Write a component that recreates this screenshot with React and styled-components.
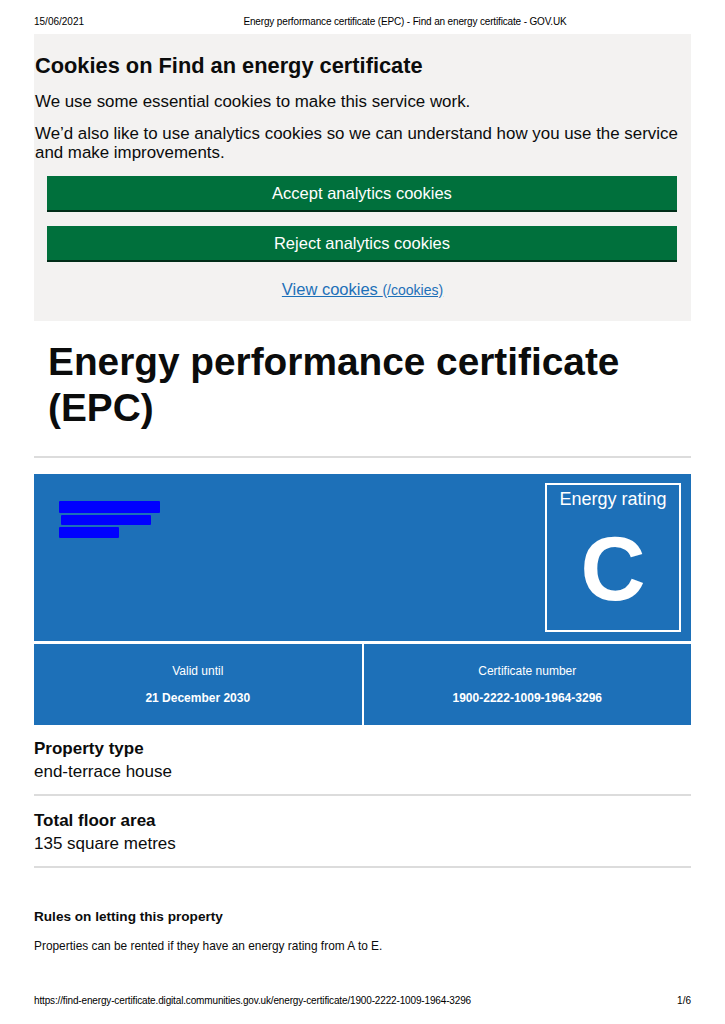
import styled, { createGlobalStyle } from "styled-components"

const GlobalStyle = createGlobalStyle`
  html, body {
    margin: 0;
    padding: 0;
    background: #ffffff;
  }
  body {
    font-family: "Liberation Sans", Arial, sans-serif;
    color: #0b0c0c;
  }
`

const Page = styled.div`
  width: 725px;
  min-height: 1024px;
  display: flex;
  flex-direction: column;
  box-sizing: border-box;
  padding: 0 34px;
`
const PrintHeader = styled.header`
  display: grid;
  grid-template-columns: 85px 1fr;
  padding-top: 16px;
  font-size: 10px;
  line-height: 12px;
  color: #000;
`
const HeaderTitle = styled.span`
  text-align: center;
  letter-spacing: -0.15px;
`
const CookieBanner = styled.section`
  margin-top: 6px;
  background: #f3f2f1;
  padding: 18px 1px 21px;
`
const BannerTitle = styled.h2`
  margin: 0 0 13px;
  font-size: 21.8px;
  line-height: 27px;
  font-weight: 700;
  color: #0b0c0c;
`
const BannerText = styled.p`
  margin: 0 0 13px;
  font-size: 16.9px;
  line-height: 19px;
  color: #0b0c0c;
`
const ButtonGroup = styled.div`
  display: flex;
  flex-direction: column;
  gap: 14px;
  margin: 14px 13px 0 12px;
`
const GreenButton = styled.button`
  height: 36px;
  width: 100%;
  border: none;
  border-bottom: 2px solid #002d18;
  background: #00703c;
  color: #ffffff;
  font-family: "Liberation Sans", Arial, sans-serif;
  font-size: 16.5px;
  padding: 0;
  cursor: pointer;
`
const LinkRow = styled.div`
  margin-top: 17px;
  text-align: center;
  line-height: 20px;
`
const CookieLink = styled.a`
  color: #1d70b8;
  font-size: 16.5px;
  text-decoration: underline;
`
const LinkHint = styled.span`
  font-size: 14px;
`
const MainHeading = styled.h1`
  margin: 18px 0 0;
  padding-left: 14px;
  font-size: 38.8px;
  line-height: 46px;
  font-weight: 700;
  color: #0b0c0c;
`
const SectionBreak = styled.hr`
  margin: 25px 0 16px;
  border: none;
  border-top: 2px solid #dcdcdc;
`
const Certificate = styled.div`
  display: flex;
  flex-direction: column;
  gap: 3px;
  background: #ffffff;
`
const CertificateTop = styled.div`
  height: 167px;
  background: #1d70b8;
  display: flex;
  align-items: flex-start;
  justify-content: space-between;
  padding: 9px 10px 9px 25px;
  box-sizing: border-box;
`
const Address = styled.div`
  display: flex;
  flex-direction: column;
  gap: 2px;
  margin-top: 18px;
`
const Redacted = styled.span`
  display: block;
  height: ${(p) => p.$h || 11}px;
  width: ${(p) => p.$w}px;
  margin-left: ${(p) => p.$x || 0}px;
  background: #0000ff;
  border-radius: 1px;
`
const RatingBox = styled.div`
  width: 136px;
  height: 149px;
  box-sizing: border-box;
  border: 2px solid #ffffff;
  display: flex;
  flex-direction: column;
  align-items: center;
  color: #ffffff;
`
const RatingLabel = styled.div`
  margin-top: 3px;
  font-size: 18px;
  line-height: 22px;
`
const RatingLetter = styled.div`
  margin-top: 9px;
  font-size: 90px;
  line-height: 100px;
  font-weight: 700;
`
const CertificateBottom = styled.div`
  display: grid;
  grid-template-columns: 1fr 1fr;
  gap: 2px;
`
const InfoCell = styled.div`
  height: 81px;
  background: #1d70b8;
  color: #ffffff;
  display: flex;
  flex-direction: column;
  align-items: center;
  padding-top: 20px;
  box-sizing: border-box;
  font-size: 12px;
  line-height: 14px;
`
const InfoValue = styled.div`
  margin-top: 13px;
  font-weight: 700;
`
const SummaryList = styled.dl`
  margin: 12px 0 0;
`
const SummaryRow = styled.div`
  padding-bottom: 11px;
  margin-bottom: 13px;
  border-bottom: 2px solid #dcdcdc;
`
const SummaryKey = styled.dt`
  font-size: 17px;
  line-height: 23px;
  font-weight: 700;
`
const SummaryValue = styled.dd`
  margin: 0;
  font-size: 17px;
  line-height: 23px;
`
const RulesHeading = styled.h3`
  margin: 27px 0 0;
  font-size: 13.6px;
  line-height: 18px;
  font-weight: 700;
`
const RulesText = styled.p`
  margin: 12px 0 0;
  font-size: 11.9px;
  line-height: 16px;
`
const PrintFooter = styled.footer`
  margin-top: auto;
  padding-bottom: 17px;
  display: flex;
  justify-content: space-between;
  font-size: 10px;
  line-height: 12px;
  color: #000;
`
const FooterUrl = styled.span`
  letter-spacing: -0.15px;
`

export default function App() {
  return (
    <>
      <GlobalStyle />
      <Page>
        <PrintHeader>
          <span>15/06/2021</span>
          <HeaderTitle>
            Energy performance certificate (EPC) - Find an energy certificate - GOV.UK
          </HeaderTitle>
        </PrintHeader>

        <CookieBanner>
          <BannerTitle>Cookies on Find an energy certificate</BannerTitle>
          <BannerText>We use some essential cookies to make this service work.</BannerText>
          <BannerText>
            We’d also like to use analytics cookies so we can understand how you use the service
            and make improvements.
          </BannerText>
          <ButtonGroup>
            <GreenButton>Accept analytics cookies</GreenButton>
            <GreenButton>Reject analytics cookies</GreenButton>
          </ButtonGroup>
          <LinkRow>
            <CookieLink href="#">
              View cookies <LinkHint>(/cookies)</LinkHint>
            </CookieLink>
          </LinkRow>
        </CookieBanner>

        <MainHeading>Energy performance certificate (EPC)</MainHeading>
        <SectionBreak />

        <Certificate>
          <CertificateTop>
            <Address>
              <Redacted $w={101} $h={12} />
              <Redacted $w={90} $h={10} $x={2} />
              <Redacted $w={60} $h={11} />
            </Address>
            <RatingBox>
              <RatingLabel>Energy rating</RatingLabel>
              <RatingLetter>C</RatingLetter>
            </RatingBox>
          </CertificateTop>
          <CertificateBottom>
            <InfoCell>
              Valid until
              <InfoValue>21 December 2030</InfoValue>
            </InfoCell>
            <InfoCell>
              Certificate number
              <InfoValue>1900-2222-1009-1964-3296</InfoValue>
            </InfoCell>
          </CertificateBottom>
        </Certificate>

        <SummaryList>
          <SummaryRow>
            <SummaryKey>Property type</SummaryKey>
            <SummaryValue>end-terrace house</SummaryValue>
          </SummaryRow>
          <SummaryRow>
            <SummaryKey>Total floor area</SummaryKey>
            <SummaryValue>135 square metres</SummaryValue>
          </SummaryRow>
        </SummaryList>

        <RulesHeading>Rules on letting this property</RulesHeading>
        <RulesText>Properties can be rented if they have an energy rating from A to E.</RulesText>

        <PrintFooter>
          <FooterUrl>
            https://find-energy-certificate.digital.communities.gov.uk/energy-certificate/1900-2222-1009-1964-3296
          </FooterUrl>
          <span>1/6</span>
        </PrintFooter>
      </Page>
    </>
  )
}
